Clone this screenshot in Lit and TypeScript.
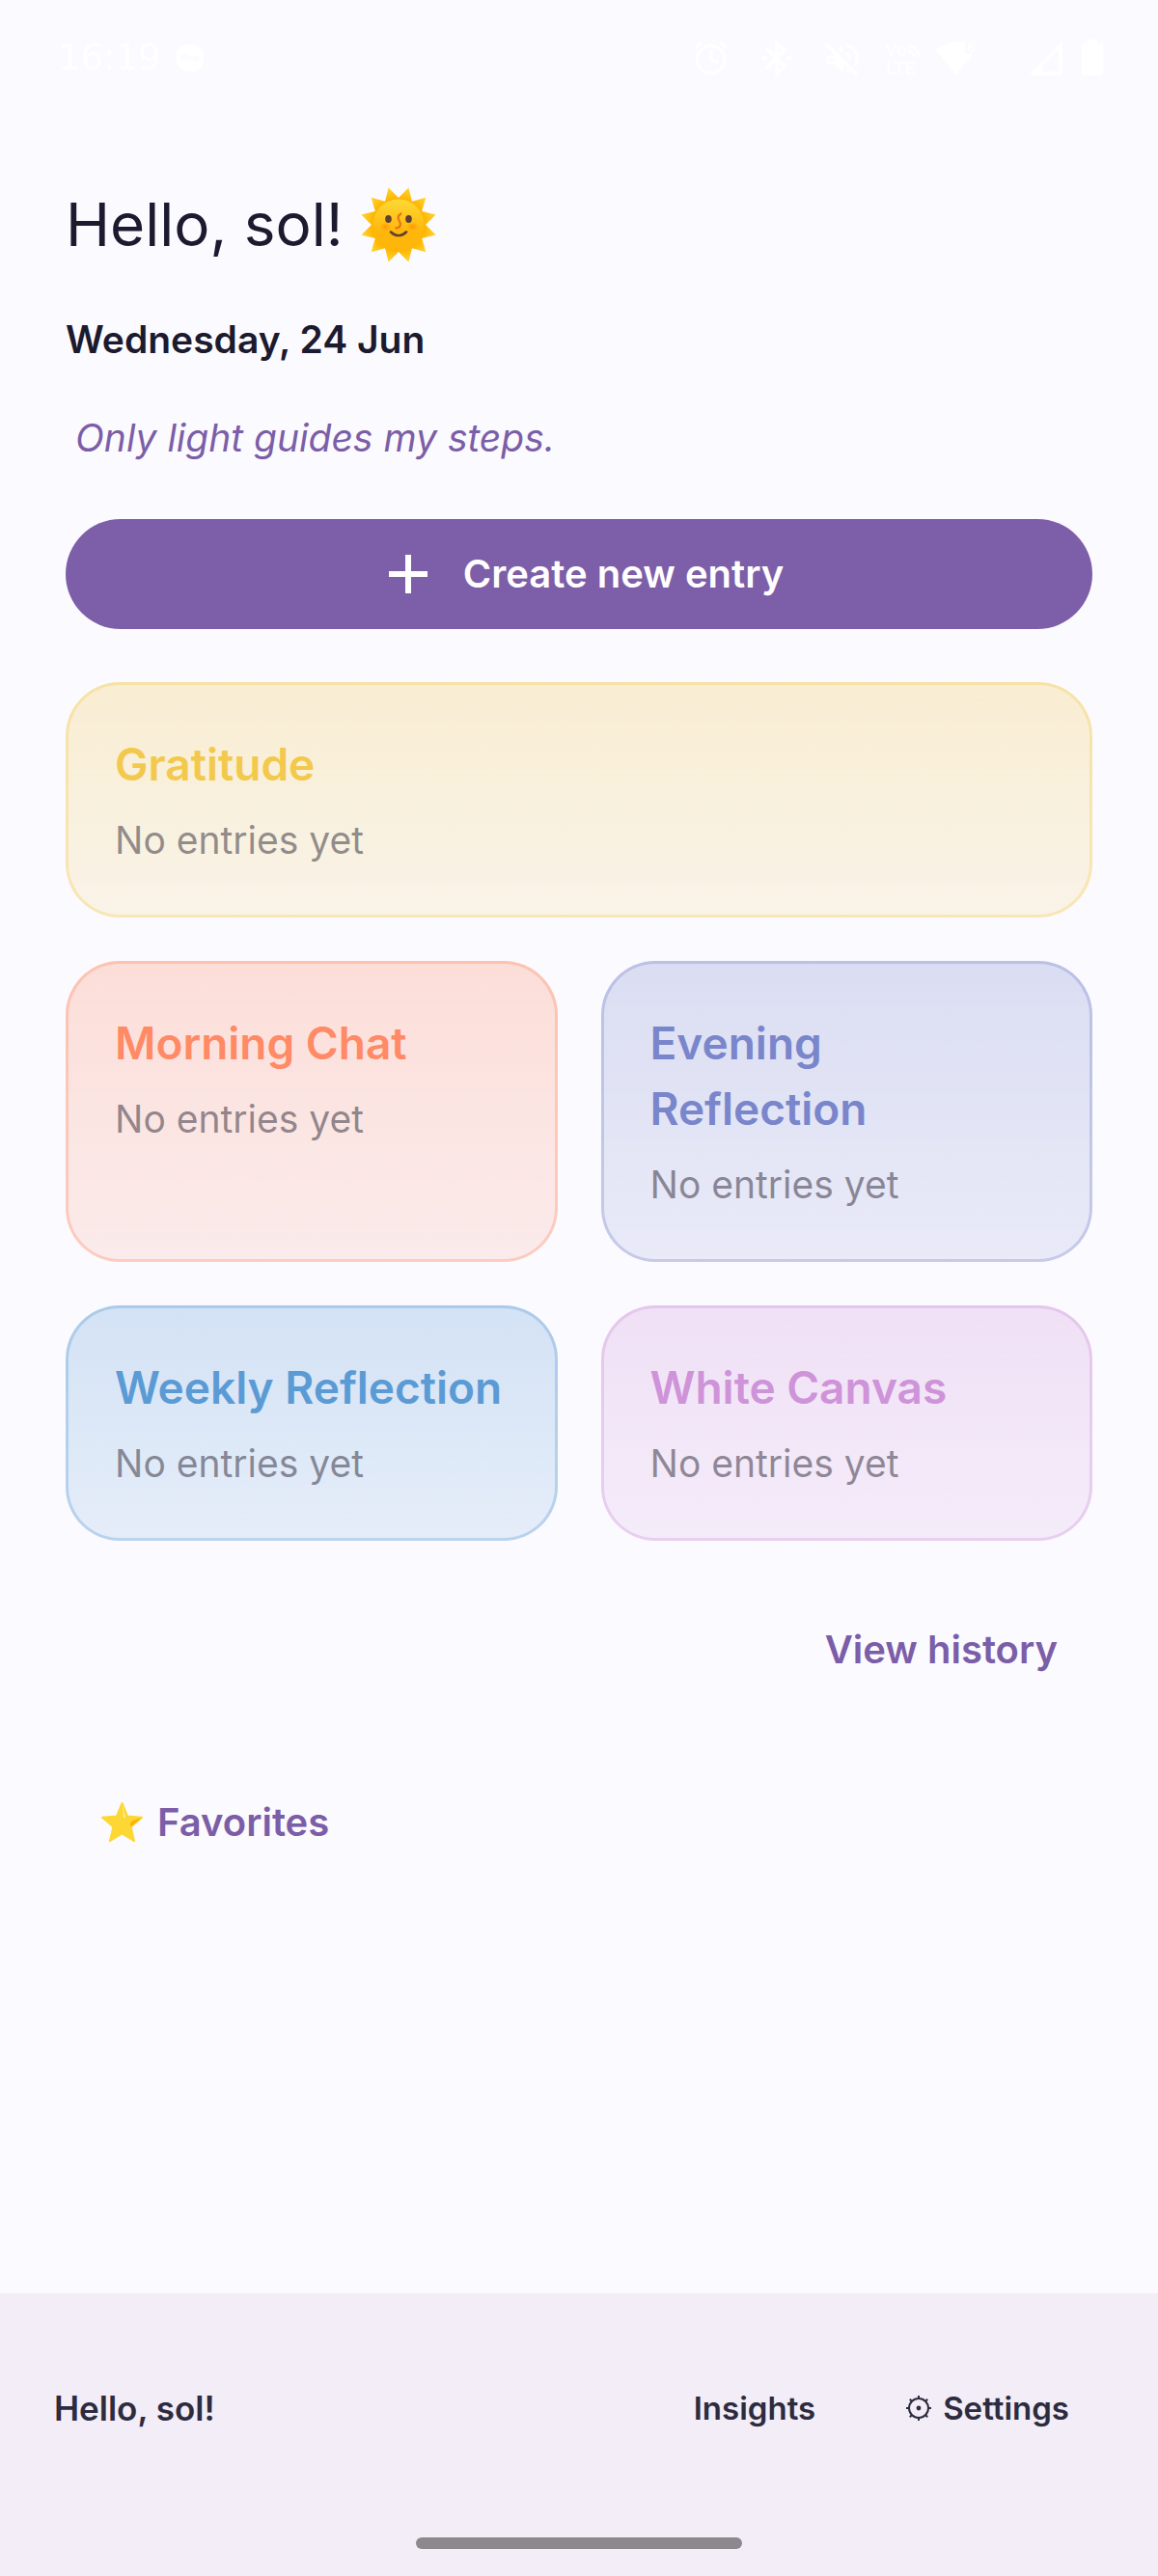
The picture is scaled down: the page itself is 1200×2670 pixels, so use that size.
import { LitElement, html, css } from 'lit';
import { customElement, property } from 'lit/decorators.js';

@customElement('status-bar')
export class StatusBar extends LitElement {
  static get styles() {
    return css`
      :host {
        display: flex;
        align-items: center;
        justify-content: space-between;
        height: 120px;
        padding: 0 54px 0 60px;
        color: #fff;
      }

      .left {
        display: flex;
        align-items: center;
        gap: 16px;
        font-family: 'DejaVu Sans', sans-serif;
        font-size: 37px;
        line-height: 48px;
      }

      svg {
        display: block;
      }

      .label {
        font-family: Roboto, sans-serif;
        font-weight: 500;
      }
    `;
  }

  @property({ type: String })
  time = '';

  render() {
    return html`
      <div class="left">
        <span>${this.time}</span>
        <svg width="28" height="28" viewBox="0 0 28 28">
          <rect width="28" height="28" rx="12" fill="#fff" />
          <text class="label" x="14" y="17" font-size="9" text-anchor="middle" fill="#fbfaff">Wear</text>
        </svg>
      </div>
      <svg width="428" height="40" viewBox="0 0 428 40" fill="none" stroke="#fff" stroke-width="3.4">
        <!-- alarm -->
        <circle cx="18.7" cy="21.7" r="14.2" />
        <path d="M19 12.7v10.4h7M3 10l6-6M29 4l6 6" />
        <!-- bluetooth -->
        <path d="M76 9.5l19.3 19.5-8.3 7.5v-32l8.3 7.8L76 30.7" />
        <g fill="#fff" stroke="none">
          <circle cx="74.2" cy="20.3" r="2.6" />
          <circle cx="100" cy="20.3" r="2.6" />
        </g>
        <!-- muted -->
        <path d="M138 5.7l32 31.6M140.5 19.4h6.5l7.2 6.8v5l-6.6-6.2h-7.1z" />
        <path d="M159.5 6.5a15 15 0 0 1 9 21.5M159.5 14.5a7 7 0 0 1 2.4 7M159 34.5l3.4-1.6" />
        <path d="M155 6.5v9l-4.5-4.5z" fill="#fff" stroke="none" />
        <!-- volte -->
        <g class="label" fill="#fff" stroke="none" font-size="19">
          <text x="199" y="17.5">Vo</text>
          <text x="200" y="36.5">LTE</text>
        </g>
        <path d="M223.5 7.2a14 14 0 0 1 11.5 11.5M223 12.5a9 9 0 0 1 7 6.5" stroke-width="2.4" />
        <!-- wifi -->
        <path d="M252 11.7C260 5 270 2.4 282 3.4v12.3h8.5L273 37.5z" fill="#fff" stroke="none" />
        <text class="label" x="284" y="13.5" font-size="15" fill="#fff" stroke="none">6</text>
        <!-- signal and battery -->
        <g fill="#fff" stroke="none">
          <path fill-rule="evenodd" d="M382.7 2.7V38H348zM379 11.7L363 28v6h16z" />
          <rect x="402.7" y="4.7" width="22.6" height="33.3" rx="3" />
          <rect x="409.3" y="0.7" width="9.4" height="6" />
        </g>
      </svg>
    `;
  }
}

@customElement('journal-card')
export class JournalCard extends LitElement {
  static get styles() {
    return css`
      :host {
        display: block;
        box-sizing: border-box;
        padding: 48px;
        border: 3px solid rgb(var(--accent) / 32%);
        border-radius: 56px;
        background: linear-gradient(rgb(var(--accent) / 25%), rgb(var(--accent) / 13%)) border-box;
      }

      .title {
        margin: 0 0 16px;
        color: rgb(var(--accent));
        font-weight: 600;
        font-size: 46px;
        line-height: 68px;
      }

      .note {
        margin: 0;
        color: rgb(44 38 54 / 50%);
        font-size: 39px;
        line-height: 58px;
      }
    `;
  }

  @property({ type: String })
  heading = '';
  @property({ type: String })
  note = 'No entries yet';

  render() {
    return html`
      <h2 class="title">${this.heading}</h2>
      <p class="note">${this.note}</p>
    `;
  }
}

@customElement('app-root')
export class AppRoot extends LitElement {
  static get styles() {
    return css`
      :host {
        display: flex;
        flex-direction: column;
        min-height: 100vh;
        background: #fbfaff;
        color: #1c1a2e;
        font-family: Inter, 'Open Sans', sans-serif;
      }

      main {
        flex: 1;
        display: flex;
        flex-direction: column;
        padding: 68px 68px 0;
      }

      h1 {
        display: flex;
        align-items: center;
        gap: 18px;
        margin: 0 0 45px;
        font-weight: 400;
        font-size: 62px;
        line-height: 90px;
      }

      .date,
      .quote {
        margin: 0 0 45px;
        font-size: 39px;
        line-height: 57px;
      }

      .date {
        font-weight: 600;
      }

      .quote {
        margin-bottom: 56px;
        padding-left: 10px;
        color: #7b5ea7;
        font-style: italic;
      }

      button {
        display: flex;
        align-items: center;
        margin: 0;
        border: 0;
        background: none;
        color: #7b5ea7;
        font-family: inherit;
        font-weight: 600;
        font-size: 40px;
        line-height: 58px;
        cursor: pointer;
      }

      .create {
        justify-content: center;
        gap: 36px;
        padding: 28px 48px 28px 62px;
        border-radius: 57px;
        background: #7d5ea8;
        color: #fff;
      }

      .cards {
        display: grid;
        grid-template-columns: 1fr 1fr;
        gap: 45px;
        margin: 55px 0 56px;
      }

      .gratitude {
        --accent: 242 201 76;
        grid-column: span 2;
      }

      .morning {
        --accent: 255 138 101;
      }

      .evening {
        --accent: 121 134 203;
      }

      .weekly {
        --accent: 91 155 213;
      }

      .canvas {
        --accent: 206 147 216;
      }

      .link {
        gap: 14px;
        padding: 28px 36px;
      }

      .history {
        align-self: flex-end;
        margin-bottom: 65px;
      }

      .favorites {
        align-self: flex-start;
      }

      footer {
        padding: 80px 56px 28px;
        background: #f2edf7;
        color: #2d2b3f;
        font-weight: 600;
        font-size: 35px;
        line-height: 48px;
      }

      .bar {
        display: flex;
        align-items: center;
        gap: 22px;
        margin-bottom: 95px;
      }

      .name {
        flex: 1;
      }

      .bar button {
        gap: 12px;
        padding: 15px 36px;
        color: inherit;
        font-size: 33px;
        line-height: 48px;
      }

      .home {
        width: 338px;
        height: 12px;
        margin: 0 auto;
        border-radius: 6px;
        background: #8b898d;
      }

      svg {
        display: block;
        flex: none;
      }
    `;
  }

  @property({ type: String })
  name = 'sol';

  private sun() {
    // twelve rays, with a gap pointing straight up
    const points = Array.from({ length: 24 }, (_, i) => {
      const angle = (i * Math.PI) / 12;
      const radius = i % 2 ? 40 : 28;
      return `${(39 + radius * Math.sin(angle)).toFixed(1)},${(39 - radius * Math.cos(angle)).toFixed(1)}`;
    }).join(' ');
    return html`
      <svg width="78" height="78" viewBox="0 0 78 78" role="img" aria-label="Sun">
        <defs>
          <radialGradient id="rays" gradientUnits="userSpaceOnUse" cx="39" cy="39" r="40">
            <stop offset="0.66" stop-color="#ffb300" />
            <stop offset="1" stop-color="#fdd835" />
          </radialGradient>
          <linearGradient id="face" x1="0" y1="0" x2="0" y2="1">
            <stop offset="0" stop-color="#fdd835" />
            <stop offset="0.65" stop-color="#ffb60a" />
          </linearGradient>
          <radialGradient id="cheek">
            <stop offset="0" stop-color="#ff8f00" stop-opacity="0.8" />
            <stop offset="1" stop-color="#ff8f00" stop-opacity="0" />
          </radialGradient>
        </defs>
        <polygon points=${points} fill="url(#rays)" />
        <circle cx="39" cy="39" r="26.5" fill="url(#face)" />
        <ellipse cx="25.5" cy="41" rx="6" ry="4.6" fill="url(#cheek)" />
        <ellipse cx="53.5" cy="41" rx="6" ry="4.6" fill="url(#cheek)" />
        <ellipse cx="28.5" cy="33" rx="3.3" ry="4" fill="#5d4037" />
        <ellipse cx="49.5" cy="33" rx="3.3" ry="4" fill="#5d4037" />
        <path
          d="M41.5 27.5c-3.6 2.4-3.4 5-1.6 7.6 2.2 3.4.8 7.4-3.6 7.2"
          fill="none"
          stroke="#e67514"
          stroke-width="2.2"
          stroke-linecap="round"
        />
        <path
          d="M31 46.5c5 4.7 11 4.7 16 0"
          fill="none"
          stroke="#5d4037"
          stroke-width="2.6"
          stroke-linecap="round"
        />
      </svg>
    `;
  }

  private star() {
    return html`
      <svg width="45" height="44" viewBox="0 0 45 44" aria-hidden="true">
        <path
          d="M22.5 2l5.6 13.6 14.9 1.2-11.4 9.7 3.5 14.7-12.6-7.9-12.6 7.9 3.5-14.7L2 16.8l14.9-1.2z"
          fill="#fdd835"
          stroke="#fdd835"
          stroke-width="2"
          stroke-linejoin="round"
        />
        <path d="M42.5 17.5L31.6 26.8l-.8-3.3c1-3.6 6-5.5 11.7-6z" fill="#ffb300" />
        <path d="M23 5l2.8 11.5c-.8.8-1.8.3-2-.8z" fill="#fff59d" />
      </svg>
    `;
  }

  private gear() {
    const teeth = [0, 45, 90, 135, 180, 225, 270, 315];
    const d = teeth
      .map((deg) => {
        const x = Math.sin((deg * Math.PI) / 180);
        const y = Math.cos((deg * Math.PI) / 180);
        return `M${13 + x * 10} ${13 + y * 10}L${13 + x * 13} ${13 + y * 13}`;
      })
      .join('');
    return html`
      <svg width="26" height="26" viewBox="0 0 26 26" fill="none" stroke="#2d2b3f" stroke-width="2" aria-hidden="true">
        <circle cx="13" cy="13" r="10" />
        <path d=${d} />
        <circle cx="13" cy="13" r="2.4" fill="#2d2b3f" stroke="none" />
      </svg>
    `;
  }

  render() {
    return html`
      <status-bar time="16:19"></status-bar>
      <main>
        <h1><span>Hello, ${this.name}!</span>${this.sun()}</h1>
        <p class="date">Wednesday, 24 Jun</p>
        <p class="quote">Only light guides my steps.</p>
        <button class="create">
          <svg width="42" height="42" viewBox="0 0 42 42" stroke="#fff" stroke-width="6" aria-hidden="true">
            <path d="M21 1v40M1 21h40" />
          </svg>
          Create new entry
        </button>
        <div class="cards">
          <journal-card class="gratitude" heading="Gratitude"></journal-card>
          <journal-card class="morning" heading="Morning Chat"></journal-card>
          <journal-card class="evening" heading="Evening Reflection"></journal-card>
          <journal-card class="weekly" heading="Weekly Reflection"></journal-card>
          <journal-card class="canvas" heading="White Canvas"></journal-card>
        </div>
        <button class="link history">View history</button>
        <button class="link favorites">${this.star()}Favorites</button>
      </main>
      <footer>
        <div class="bar">
          <span class="name">Hello, ${this.name}!</span>
          <button>Insights</button>
          <button>${this.gear()}Settings</button>
        </div>
        <div class="home"></div>
      </footer>
    `;
  }
}
